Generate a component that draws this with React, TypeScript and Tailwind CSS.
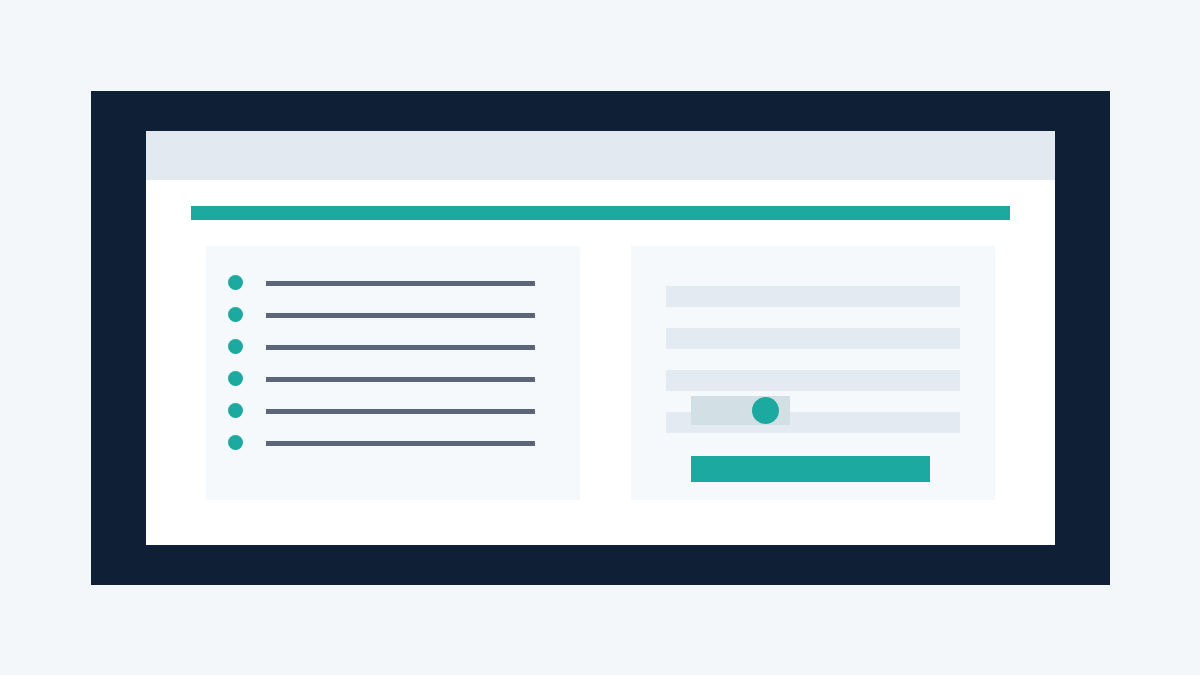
export default function App() {
  const rows = [0, 1, 2, 3, 4, 5];
  const fields = [0, 1, 2, 3];

  return (
    <div className="flex h-[675px] w-full items-center justify-center bg-[#f3f7fa]">
      <div className="ml-[1px] mt-[1px] bg-[#0f1f35] px-[55px] py-[40px]">
        <div className="flex h-[414px] w-[909px] flex-col bg-white">
          <div className="h-[49px] bg-[#e2e9f1]" />
          <div className="px-[45px] pt-[26px]">
            <div className="h-[14px] bg-[#1ca99f]" />
            <div className="mt-[26px] flex gap-[51px] px-[15px]">
              {/* list card */}
              <div className="flex h-[254px] w-[374px] flex-col gap-[17px] bg-[#f5f9fc] pl-[22px] pt-[29px]">
                {rows.map((r) => (
                  <div key={r} className="flex items-start gap-[23px]">
                    <div className="h-[15px] w-[15px] rounded-full bg-[#1ca99f]" />
                    <div className="mt-[6px] h-[5px] w-[269px] bg-[#5b6678]" />
                  </div>
                ))}
              </div>
              {/* form card */}
              <div className="relative h-[254px] w-[364px] bg-[#f5f9fc] px-[35px] pt-[40px]">
                <div className="flex flex-col gap-[21px]">
                  {fields.map((f) => (
                    <div key={f} className="h-[21px] w-[294px] bg-[#e3eaf2]" />
                  ))}
                </div>
                <div className="ml-[25px] mt-[23px] h-[26px] w-[239px] bg-[#1ca99f]" />
                <div className="absolute left-[60px] top-[150px] h-[29px] w-[99px] bg-[#d2e0e6]">
                  <div className="absolute left-[61px] top-[1px] h-[27px] w-[27px] rounded-full bg-[#1ca99f]" />
                </div>
              </div>
            </div>
          </div>
        </div>
      </div>
    </div>
  );
}
